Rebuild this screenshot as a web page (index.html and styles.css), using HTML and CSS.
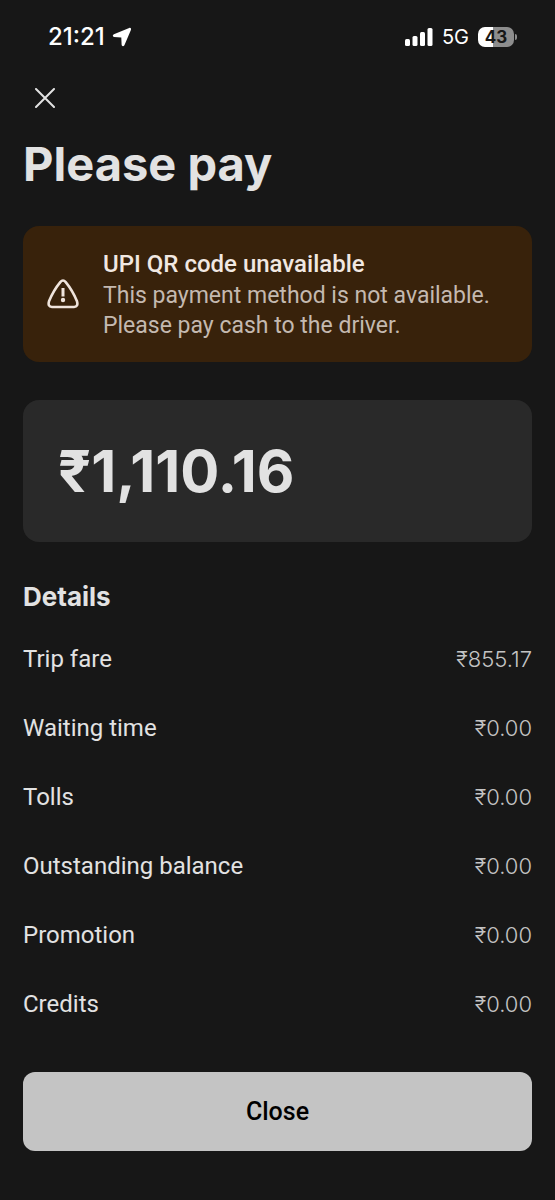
FILE: index.html
```html
<!DOCTYPE html>
<html lang="en">
<head>
<meta charset="utf-8">
<meta name="viewport" content="width=device-width, initial-scale=1">
<title>Please pay</title>
<link rel="stylesheet" href="styles.css">
</head>
<body>
<div class="screen">
  <header class="status">
    <div class="status-left">
      <span class="time">21:21</span>
      <svg class="arrow" viewBox="0 0 20 20" width="20" height="20" aria-hidden="true"><path d="M17.2 1 1.900 7.300C.3 8 .5 9.900 2.100 10L9.300 10.600 9.600 17.600C9.700 19.400 11.600 19.700 12.400 18.200L18.900 3C19.500 1.500 18.600.4 17.200 1Z" fill="#fff"/></svg>
    </div>
    <div class="status-right">
      <svg viewBox="0 0 28 18" width="28" height="18" aria-hidden="true"><g fill="#fff"><rect x="0" y="11" width="5" height="7" rx="1.500"/><rect x="7.500" y="8" width="5" height="10" rx="1.500"/><rect x="15" y="4" width="5" height="14" rx="1.500"/><rect x="22.500" y="0" width="5" height="18" rx="1.500"/></g></svg>
      <span class="network">5G</span>
      <div class="battery"><span class="level">43</span><span class="tip"></span></div>
    </div>
  </header>
  <main class="content">
    <button class="dismiss" type="button" aria-label="Dismiss">
      <svg viewBox="0 0 20 20" width="20" height="20" aria-hidden="true"><path d="M1 1 19 19M19 1 1 19" stroke="#e2e2e2" stroke-width="2" stroke-linecap="round"/></svg>
    </button>
    <h1 class="title">Please pay</h1>
    <section class="alert">
      <svg class="alert-icon" viewBox="0 0 32 30" width="32" height="30" aria-hidden="true"><path d="M13.300 3.100Q16 0 18.700 3.100 25.500 11.300 30 22.300 31.500 27.600 27 28H5Q.5 27.600 2 22.300 6.500 11.300 13.300 3.100Z" fill="none" stroke="#efe4dc" stroke-width="2.600" stroke-linejoin="round"/><rect x="14.500" y="9" width="3" height="8.500" fill="#efe4dc"/><circle cx="16" cy="21" r="2.200" fill="#efe4dc"/></svg>
      <div class="alert-text">
        <h2 class="alert-title">UPI QR code unavailable</h2>
        <p class="alert-body">This payment method is not available. Please pay cash to the driver.</p>
      </div>
    </section>
    <section class="total">₹1,110.16</section>
    <h2 class="subtitle">Details</h2>
    <dl class="details">
      <div class="row"><dt>Trip fare</dt><dd>₹855.17</dd></div>
      <div class="row"><dt>Waiting time</dt><dd>₹0.00</dd></div>
      <div class="row"><dt>Tolls</dt><dd>₹0.00</dd></div>
      <div class="row"><dt>Outstanding balance</dt><dd>₹0.00</dd></div>
      <div class="row"><dt>Promotion</dt><dd>₹0.00</dd></div>
      <div class="row"><dt>Credits</dt><dd>₹0.00</dd></div>
    </dl>
  </main>
  <footer class="footer">
    <button class="close" type="button">Close</button>
  </footer>
</div>
</body>
</html>
```
FILE: styles.css
```css
* { box-sizing: border-box; margin: 0; }
body { background: #171717; color: #e2e2e2; font-family: Roboto, "Noto Sans", sans-serif; font-size: 23px; line-height: 30px; }
button { font: inherit; border: 0; cursor: pointer; }
.screen { min-height: 100vh; display: flex; flex-direction: column; }
.status { display: flex; justify-content: space-between; align-items: center; height: 74px; padding: 0 41px 0 48px; color: #fff; font-family: Inter, sans-serif; }
.status-left, .status-right { display: flex; align-items: center; }
.status-left { gap: 7px; }
.status-right { gap: 9px; }
.time { font-size: 24px; font-weight: 500; }
.network { font-size: 20px; }
.battery { position: relative; }
.level { display: block; width: 36px; border-radius: 7px; background: linear-gradient(90deg, #fff 43%, #8d8d8d 43%); color: #171717; font-size: 17px; font-weight: 700; line-height: 20px; text-align: center; }
.tip { position: absolute; left: 37px; top: 7px; width: 2px; height: 6px; border-radius: 0 2px 2px 0; background: #8d8d8d; }
.content { flex: 1; padding: 0 23px; }
.dismiss { display: flex; padding: 14px 12px; background: none; }
.title { margin-top: 10px; font-family: Inter, sans-serif; font-size: 47px; line-height: 64px; font-weight: 700; }
.alert { display: flex; align-items: center; gap: 24px; margin-top: 30px; padding: 21px 24px; border-radius: 16px; background: #38220b; }
.alert-icon { flex: none; }
.alert-title { font-size: 24px; line-height: 34px; font-weight: 500; color: #f1e8e2; }
.alert-body { color: #c4b9b0; }
.total { margin-top: 38px; padding: 35px; border-radius: 16px; background: #292929; font-family: Inter, sans-serif; font-size: 58px; line-height: 72px; font-weight: 700; }
.subtitle { margin-top: 38px; font-family: Inter, sans-serif; font-size: 26px; line-height: 34px; font-weight: 700; }
.details { margin-top: 10px; }
.row { display: flex; justify-content: space-between; align-items: center; height: 69px; font-size: 24px; }
.row dd { color: #c4c4c4; font-family: Inter, sans-serif; font-size: 22px; font-weight: 300; }
.footer { padding: 33px 23px 49px; }
.close { width: 100%; height: 79px; border-radius: 12px; background: #c4c4c4; color: #000; font-size: 25px; font-weight: 500; }
```
